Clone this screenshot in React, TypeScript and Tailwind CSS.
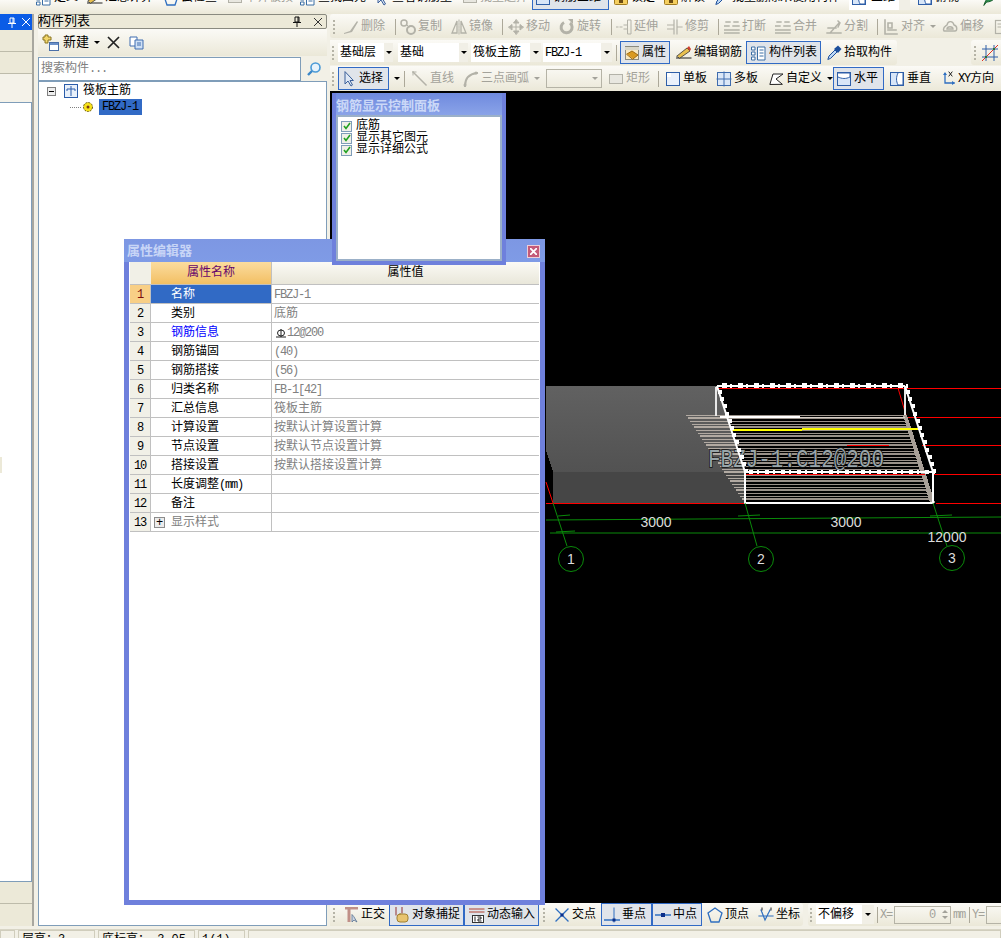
import type { ReactNode } from 'react'

const G = '#b3b2a8'

function Svg({ children }: { children: ReactNode }) {
  return (
    <svg width="16" height="16" viewBox="0 0 16 16" fill="none" strokeLinecap="square">
      {children}
    </svg>
  )
}

const icons: Record<string, ReactNode> = {
  brush: <Svg><path d="M1 14 L7 12 L14 2 L15 3 L9 13 L1 15Z" fill={G} /></Svg>,
  copy: <Svg><circle cx="4" cy="4" r="3" stroke={G} strokeWidth="1.5" /><circle cx="11" cy="11" r="4" stroke={G} strokeWidth="2" /><path d="M7 6 L9 8" stroke={G} /></Svg>,
  mirror: <Svg><path d="M6 2 L1 14 H6Z M10 2 L15 14 H10Z" stroke={G} strokeWidth="1.3" /><path d="M8 1 V15" stroke={G} strokeDasharray="2 1" /></Svg>,
  move: <Svg><path d="M8 1 V15 M1 8 H15 M8 1 L5.5 4 H10.5Z M8 15 L5.5 12 H10.5Z M1 8 L4 5.5 V10.5Z M15 8 L12 5.5 V10.5Z" stroke={G} fill={G} /></Svg>,
  rotate: <Svg><path d="M11 4 A5.5 5.5 0 1 1 5 3.5" stroke={G} strokeWidth="3" strokeLinecap="butt" /><path d="M9 0 H14 V5Z" fill={G} /></Svg>,
  extend: <Svg><path d="M0 8 H2 M4 8 H6 M8 6 H11 M8 10 H11 M12 1 H15 V15 H12Z" stroke={G} /></Svg>,
  trim: <Svg><path d="M0 6 H6 M0 10 H6 M7 1 V15 M10 1 V15 M11 8 H15" stroke={G} strokeWidth="1.2" /></Svg>,
  cut: <Svg><path d="M2 3 H6 M10 3 H14 M0 7 H5 M9 7 H15 M0 11 H15 M0 14 H15" stroke={G} strokeWidth="1.4" /></Svg>,
  split: <Svg><path d="M1 14 H15 M4 14 L13 4 M2 9 H10 M12 2 L14 4 L12 8" stroke={G} strokeWidth="1.4" /></Svg>,
  align: <Svg><path d="M2 1 V15 H14 M5 4 H9 V9 H5Z M5 11 H13" stroke={G} strokeWidth="1.6" /></Svg>,
  offset: <Svg><path d="M2 12 C0 8 4 7 5 6 C6 1 11 2 12 6 C16 7 15 12 13 12Z M5 10 C5 7 11 7 11 10Z" stroke={G} strokeWidth="1.4" /></Svg>,
  box: <Svg><rect x="2.5" y="1.5" width="11" height="13" stroke={G} strokeWidth="1.2" /><path d="M5 5 H11 M5 8 H11" stroke={G} /></Svg>,
  prop: <Svg><rect x="1.5" y="1.5" width="13" height="13" fill="#f8e8c0" stroke="#8a8a80" /><path d="M1 2 H15 V5 H1Z" fill="#d9d6c8" /><path d="M3 9 L8 6 L14 10 L9 14Z" fill="#d99a20" stroke="#a06a10" /></Svg>,
  lock: <Svg><rect x="1.5" y="1.5" width="13" height="13" rx="1" fill="#f5cf5f" stroke="#a07a20" /><path d="M8 4 V9" stroke="#6a4a10" strokeWidth="2" /><rect x="6" y="10" width="4" height="3" fill="#6a4a10" /></Svg>,
  edit: <Svg><path d="M0 13 H15" stroke="#222" /><path d="M1 11 L11 3 L14 6 L4 13Z" fill="#e8c050" stroke="#333" strokeWidth=".8" /><path d="M11 3 L13 1 L15 4 L14 6Z" fill="#d04030" /></Svg>,
  list: <Svg><path d="M1 2 H4 V5 H1Z M1 7 H4 V10 H1Z M1 12 H4 V15 H1Z" stroke="#3a6ea5" fill="#fff" /><path d="M7 2 H14 V15 H7Z" fill="#fff" stroke="#3a6ea5" /><path d="M9 5 H12 M9 8 H12 M9 11 H12" stroke="#3a6ea5" /></Svg>,
  dropper: <Svg><path d="M2 14 L3 11 L9 5 L11 7 L5 13Z" fill="#bcd7f5" stroke="#1c4f9c" /><path d="M8 4 L12 0.5 L15.5 4 L12 8Z" fill="#1c4f9c" /></Svg>,
  cursor: <Svg><path d="M4 1 V13 L7 10 L10 15 L11.5 14 L9 9.5 H12Z" fill="#dfe8f5" stroke="#3a5f9a" strokeLinejoin="round" strokeLinecap="round" /></Svg>,
  line: <Svg><path d="M1 1 L14 14" stroke={G} strokeWidth="1.5" /><path d="M1 1 H4 M1 1 V4" stroke={G} /></Svg>,
  arc: <Svg><path d="M2 15 C2 8 6 3 14 2" stroke={G} strokeWidth="2" /><circle cx="13" cy="2" r="1.5" fill={G} /><circle cx="2" cy="14" r="1.5" fill={G} /></Svg>,
  rect: <Svg><rect x="1.5" y="3.5" width="13" height="9" fill="#e8e7e0" stroke={G} /></Svg>,
  single: <Svg><rect x="1.5" y="1.5" width="13" height="13" fill="#eaf1fb" stroke="#2f5fa8" /><path d="M2 2 H6 V6 H2Z" fill="#fff" /></Svg>,
  multi: <Svg><rect x="1.5" y="1.5" width="13" height="13" fill="#dce8f7" stroke="#3e6cae" /><path d="M8 1 V15 M1 8 H15" stroke="#3e6cae" /></Svg>,
  custom: <Svg><path d="M2 13 L5 3 H15 L8 8 L14 13Z" stroke="#222" fill="#fff" strokeLinejoin="round" /></Svg>,
  horiz: <Svg><rect x="1.5" y="1.5" width="13" height="13" fill="#d8e6f8" stroke="#2f5fa8" /><path d="M2 2 H14 V6 C10 8 6 8 2 6Z" fill="#fff" stroke="#2f5fa8" /></Svg>,
  vert: <Svg><rect x="1.5" y="1.5" width="13" height="13" fill="#d8e6f8" stroke="#2f5fa8" /><path d="M9 2 C7 6 7 10 9 14 H14 V2Z" fill="#fff" stroke="#2f5fa8" /></Svg>,
  xy: <Svg><path d="M5 3 V12 H14" stroke="#2f6fc0" strokeWidth="1.3" /><path d="M5 1 L3 4 H7Z M15 12 L12 10 V14Z" fill="#2f6fc0" /><path d="M9 1 L12 5 M12 1 L9 5" stroke="#222" /></Svg>,
  ortho: <Svg><path d="M2 1 H15 M6 1 V15" stroke="#c09088" strokeWidth="3" strokeLinecap="butt" /><path d="M9 8 V15 L11 13 L14 15 L11 10Z" fill="#cfd8e6" stroke="#55708f" strokeWidth=".8" /></Svg>,
  snap: <Svg><path d="M2 0 V8 M8 0 V6" stroke="#903030" /><rect x="3" y="7" width="11" height="8" rx="3" fill="#e8c470" stroke="#a08030" /></Svg>,
  dyn: <Svg><path d="M0 2 H15 M0 5 H15" stroke="#b04030" /><rect x="3.5" y="8.5" width="11" height="7" fill="#fff" stroke="#333" /><path d="M6 10 V14 M9 10 H12 V12 H9 V14 H12" stroke="#222" /></Svg>,
  cross: <Svg><path d="M2 2 L14 14 M14 2 L2 14" stroke="#2f6fc0" strokeWidth="1.3" /><rect x="6.5" y="6.5" width="3" height="3" fill="#0b2f8a" /></Svg>,
  perp: <Svg><path d="M0 13 H16" stroke="#2f6fc0" strokeWidth="1.5" /><path d="M10 1 V15" stroke="#2f6fc0" /><rect x="8.5" y="11.5" width="3" height="3" fill="#0b2f8a" /></Svg>,
  mid: <Svg><path d="M0 8 H16" stroke="#2f6fc0" strokeWidth="1.5" /><rect x="6" y="6" width="4" height="4" fill="#0b2f8a" /></Svg>,
  vertex: <Svg><path d="M8 1 L15 6 L12 15 H4 L1 6Z" stroke="#2f6fc0" strokeWidth="1.3" /></Svg>,
  coord: <Svg><path d="M3 3 L7 13 L12 3 M1 9 H15" stroke="#2f6fc0" strokeWidth="1.2" strokeDasharray="2 1" /><path d="M4 1 V3 M13 1 V3" stroke="#222" /></Svg>,
  leaf: <Svg><path d="M1 15 C3 8 8 3 15 1 C14 8 9 12 4 12Z" fill="#2f8f4f" stroke="#1c5f30" /></Svg>,
}

// half-width latin, the reference's font sets it at 6px per character
function Lat({ children }: { children: ReactNode }) {
  return <span className="text-[12px] tracking-[-1.2px]">{children}</span>
}

type Tool = { label?: ReactNode; icon?: string; w: string; on?: boolean; off?: boolean; arrow?: boolean; extra?: string }

function Item({ label, icon, w, on, off, arrow, extra }: Tool) {
  return (
    <div
      className={`${w} ${extra ?? ''} h-[23px] shrink-0 flex items-center border ${
        on ? 'border-[#316ac5] bg-[#e0e4ea]' : 'border-transparent'
      } ${off ? 'text-[#a3a29a]' : 'text-black'}`}
    >
      <span className="w-[19px] flex justify-center shrink-0">{icon ? icons[icon] : null}</span>
      <span className="ml-[1px] whitespace-nowrap">{label}</span>
      {arrow && <Caret off={off} />}
    </div>
  )
}

function Caret({ off }: { off?: boolean }) {
  return (
    <span
      className={`ml-[5px] w-0 h-0 border-x-[3px] border-t-[3px] border-x-transparent ${
        off ? 'border-t-[#a3a29a]' : 'border-t-black'
      }`}
    />
  )
}

function Grip({ w }: { w: string }) {
  return (
    <div className={`${w} shrink-0 flex flex-col items-center gap-[2px] pr-[3px]`}>
      <i className="w-[2px] h-[2px] bg-[#b5b3a6]" />
      <i className="w-[2px] h-[2px] bg-[#b5b3a6]" />
      <i className="w-[2px] h-[2px] bg-[#b5b3a6]" />
      <i className="w-[2px] h-[2px] bg-[#b5b3a6]" />
    </div>
  )
}

function Sep({ w }: { w: string }) {
  return (
    <div className={`${w} shrink-0 flex justify-center`}>
      <i className="w-[1px] h-[16px] bg-[#aca899]" />
    </div>
  )
}

function Select({ label, w, btn }: { label: ReactNode; w: string; btn: string }) {
  return (
    <div className={`${w} h-[19px] shrink-0 flex bg-white items-center pl-[2px]`}>
      <span className="flex-1 whitespace-nowrap">{label}</span>
      <span className={`${btn} h-full bg-[#f1efe6] flex items-center justify-center`}>
        <i className="w-0 h-0 border-x-[3px] border-t-[3px] border-x-transparent border-t-black" />
      </span>
    </div>
  )
}

const barBg = 'bg-gradient-to-b from-[#fbfaf6] to-[#ebe8d8]'

const props: [ReactNode, string][] = [
  ['名称', 'FBZJ-1'],
  ['类别', '底筋'],
  ['钢筋信息', '12@200'],
  ['钢筋锚固', '(40)'],
  ['钢筋搭接', '(56)'],
  ['归类名称', 'FB-1[42]'],
  ['汇总信息', '筏板主筋'],
  ['计算设置', '按默认计算设置计算'],
  ['节点设置', '按默认节点设置计算'],
  ['搭接设置', '按默认搭接设置计算'],
  [<>长度调整<Lat>(mm)</Lat></>, ''],
  ['备注', ''],
  ['显示样式', ''],
]

function PropRow({ name, value, i }: { name: ReactNode; value: string; i: number }) {
  const sel = i === 0
  const latin = /^[\x00-\x7f]+$/.test(value)
  return (
    <div className="flex h-[19px] border-b border-[#c0c0c0]">
      <div
        className={`w-[21px] shrink-0 flex items-center justify-center pt-[1px] border-r border-[#c0c0c0] ${
          sel ? 'bg-[#f8cf86] text-[#7a0d0d]' : 'bg-[#f1f0e7]'
        }`}
      >
        <Lat>{i + 1}</Lat>
      </div>
      <div
        className={`w-[121px] shrink-0 flex items-center pt-[1px] border-r border-[#c0c0c0] ${
          sel ? 'bg-[#316ac5] text-white' : i === 2 ? 'text-[#0000ff]' : i === 12 ? 'text-[#808080]' : 'text-black'
        }`}
      >
        {i === 12 ? (
          <span className="ml-[3px] mr-[6px] w-[11px] h-[11px] border border-[#8c8c8c] bg-[#ececec] flex items-center justify-center text-black">
            +
          </span>
        ) : (
          <span className="w-[20px]" />
        )}
        {name}
      </div>
      <div className="flex-1 flex items-center pt-[1px] pl-[2px] text-[#808080] whitespace-nowrap">
        {i === 2 && (
          <svg width="10" height="10" viewBox="0 0 10 10" className="ml-[2px] mr-[1px]" fill="none" stroke="#222">
            <path d="M5 1 V9 M0 9 H10" />
            <ellipse cx="5" cy="5" rx="3.5" ry="3" />
          </svg>
        )}
        {latin && value ? <Lat>{value}</Lat> : value}
      </div>
    </div>
  )
}

function Canvas() {
  const hatch = Array.from({ length: 30 }, (_, i) => 415 + i * 3)
  const dots = Array.from({ length: 12 }, (_, i) => i)
  return (
    <svg viewBox="330 91 671 812" width="671" height="812" className="block" shapeRendering="crispEdges">
      <defs>
        <linearGradient id="slab" x1="0" y1="0" x2="0" y2="1">
          <stop offset="0" stopColor="#616161" />
          <stop offset="1" stopColor="#525252" />
        </linearGradient>
      </defs>
      <polygon points="546,386 717,386 745,472 553,472 546,450" fill="url(#slab)" />
      <polygon points="553,472 745,472 745,503 553,503" fill="#464646" />
      {hatch.map((y, i) => {
        const mid = Math.min(726 + (y - 415) * 0.33, 745)
        return (
          <g key={y} strokeWidth={i % 3 === 1 ? 2 : 1}>
            <line x1={686 + (y - 415) * 0.67} x2={mid} y1={y} y2={y} stroke="#b2aaa2" />
            <line x1={mid} x2={904 + (y - 415) * 0.33} y1={y} y2={y} stroke="#9a9189" />
          </g>
        )
      })}
      <polygon points="903,415 907,415 935,503 930,503" fill="#a89f97" />
      <path d="M546 503 H745 M718 388 H905 M907 388 H1001 M908 417 H1001 M922 445 H1001 M847 445 H889 M745 474 H925 M934 474 H1001 M936 503 H1001" stroke="#ff0000" fill="none" />
      <path d="M898 388 L906 415 M546 482 L553 503" stroke="#ff0000" fill="none" shapeRendering="auto" />
      <path d="M731 430 H802 M802 429 H922" stroke="#ffff00" strokeWidth="2" />
      <path d="M720 417 H800" stroke="#ffffff" strokeWidth="2" />
      <path d="M800 417 H905" stroke="#d8d0c8" strokeWidth="1" />
      <text x="708" y="467" fontSize="25" textLength="176" lengthAdjust="spacingAndGlyphs" fill="#98a5aa" stroke="#111" strokeWidth="1.6" paintOrder="stroke" fontFamily="Liberation Mono" shapeRendering="auto">
        FBZJ-1:C12@200
      </text>
      <path d="M716 387 V416 M905 387 V415" stroke="#e8e8e8" strokeWidth="2" />
      <path d="M717 386 H905 M717 386 L745 472 M905 386 L933 472 M745 472 H933" stroke="#fff" strokeWidth="2" fill="none" shapeRendering="auto" />
      {Array.from({ length: 12 }, (_, i) => (
        <g key={i} fill="#fff">
          <rect x={722 + i * 16} y={383} width="5" height="5" />
          <rect x={730 + i * 16} y={384} width="2" height="4" />
          <rect x={749 + i * 16} y={470} width="4" height="4" />
          <rect x={757 + i * 16} y={470} width="2" height="4" />
        </g>
      ))}
      {dots.map(i => (
        <g key={i} fill="#fff">
          <rect x={718 + i * 2.4} y={390 + i * 7.2} width="4" height="4" />
          <rect x={906 + i * 2.4} y={390 + i * 7.2} width="4" height="4" />
        </g>
      ))}
      <path d="M745 472 V503 H933 V472" stroke="#fff" strokeWidth="2" fill="none" />
      <g stroke="#0a8a0a" fill="none" shapeRendering="auto">
        <path d="M546 520 L1001 517 M550 533 H1001" />
        <path d="M553 503 L567 546 M745 503 L757 546 M933 503 L947 546" />
        <path d="M558 516 L570 515 M738 516 L760 515 M930 516 L952 515 M556 532 L575 531" />
        <circle cx="571" cy="559" r="12.5" />
        <circle cx="761" cy="559" r="12.5" />
        <circle cx="952" cy="558" r="12.5" />
      </g>
      <g fill="#dcdcdc" fontFamily="Liberation Sans" fontSize="14" textAnchor="middle" shapeRendering="auto">
        <text x="656" y="527">3000</text>
        <text x="846" y="527">3000</text>
        <text x="947" y="542">12000</text>
        <text x="571" y="564">1</text>
        <text x="761" y="564">2</text>
        <text x="952" y="563">3</text>
      </g>
    </svg>
  )
}

export default function App() {
  return (
    <div className="relative w-[1001px] h-[938px] overflow-hidden bg-[#f2f0e6] text-[12px] leading-none font-['Liberation_Mono','Noto_Sans_CJK_SC',monospace]">
      {/* clipped main toolbar */}
      <div className={`h-[14px] overflow-hidden ${barBg}`}>
        <div className="flex items-center h-[24px] -mt-[14px] pl-[33px]">
          <Item icon="list" label="定义" w="w-[51px]" />
          <Item icon="edit" label="汇总计算" w="w-[76px]" />
          <Item icon="vertex" label="云检查" w="w-[64px]" />
          <Item off icon="rect" label="平齐板顶" w="w-[73px]" />
          <Item icon="list" label="查找图元" w="w-[74px]" />
          <Item icon="cursor" label="查看钢筋量" w="w-[88px]" />
          <Item off icon="rect" label="批量选择" w="w-[73px]" />
          <Item on icon="horiz" label="钢筋三维" w="w-[77px]" />
          <Item icon="lock" label="锁定" w="w-[50px] ml-[1px]" />
          <Item icon="lock" label="解锁" w="w-[51px]" />
          <Item icon="dropper" label="批量删除未使用构件" w="w-[138px]" />
          <div className="w-[50px] h-[23px] bg-white flex items-center shrink-0">
            <span className="ml-[2px] mr-[4px] flex">{icons.vert}</span>
            三维
          </div>
          <div className="w-[11px] h-[23px] bg-[#f1efe6] shrink-0" />
          <Item icon="vert" label="俯视" w="w-[66px] ml-[4px]" arrow />
          <Item icon="leaf" w="w-[21px]" />
        </div>
      </div>

      <div className="flex h-[912px]">
        {/* left collapsed panel */}
        <div className="w-[34px] shrink-0 flex flex-col border-r-2 border-[#a8a79f] bg-[#ece9d8]">
          <div className="h-[16px] bg-[#0a5ce6] flex items-center justify-end gap-[5px] pr-[2px] shrink-0">
            <svg width="10" height="11" viewBox="0 0 10 11" fill="none" stroke="#fff"><path d="M3 1 H7 V6 H3Z M1 6.5 H9 M5 7 V11 M6 1 V6" /></svg>
            <svg width="8" height="8" viewBox="0 0 8 8" stroke="#fff"><path d="M0 0 L8 8 M8 0 L0 8" /></svg>
          </div>
          <div className="h-[22px] border-b border-[#bdbbaa] shrink-0" />
          <div className="h-[22px] border-b border-[#bdbbaa] shrink-0" />
          <div className="h-[28px] bg-[#f4f2e9] shrink-0" />
          <div className="flex-1 bg-white border-y border-r border-[#7f9db9] relative">
            <div className="absolute left-0 top-[354px] w-[2px] h-[16px] bg-[#ece9d8]" />
          </div>
          <div className="h-[22px] border-b border-[#bdbbaa] shrink-0" />
          <div className="h-[22px] shrink-0" />
        </div>
        <div className="w-[4px] shrink-0 bg-[#f2f0e6]" />

        {/* component list */}
        <div className="w-[289px] shrink-0 flex flex-col">
          <div className="h-[15px] shrink-0 border border-[#8a8a80] bg-[#ece9d8] rounded-[2px] flex items-center pr-[4px]">
            <span className="flex-1 -ml-[1px] whitespace-nowrap text-[13px]">构件列表</span>
            <svg width="10" height="11" viewBox="0 0 10 11" fill="none" stroke="#111"><path d="M3 1 H7 V6 H3Z M1 6.5 H9 M5 7 V11 M6 1 V6" /></svg>
            <svg width="8" height="8" viewBox="0 0 8 8" stroke="#333" className="ml-[12px]"><path d="M0 0 L8 8 M8 0 L0 8" /></svg>
          </div>
          <div className={`h-[27px] shrink-0 flex items-center pl-[4px] ${barBg}`}>
            <svg width="18" height="18" viewBox="0 0 18 18" fill="none"><path d="M3 1 H6 V3 H9 V6 H6 V9 H3 V6 H1 V3 H3Z" fill="#f2d76b" stroke="#8a7420" /><rect x="7.5" y="8.5" width="9" height="8" fill="#fff" stroke="#4a6fa8" /><path d="M8 9 H16 V11 H8Z" fill="#6b90c8" /></svg>
            <span className="ml-[3px] text-[13px] leading-none">新建</span>
            <Caret />
            <svg width="13" height="13" viewBox="0 0 13 13" stroke="#222" strokeWidth="1.7" className="ml-[7px]"><path d="M1 1 L12 12 M12 1 L1 12" /></svg>
            <svg width="16" height="14" viewBox="0 0 16 14" fill="#fff" stroke="#3f6db0" className="ml-[9px]"><path d="M1 1 H8 V10 H1Z" /><path d="M6 4 H14 V13 H6Z" fill="#cfe0f5" /><path d="M8 7 H12 M8 9 H12" /></svg>
          </div>
          <div className="h-[25px] shrink-0 flex items-center">
            <div className="w-[263px] h-[24px] bg-white border border-[#7f9db9] text-[#808080] flex items-center pl-[2px] text-[12px]">搜索构件<Lat>...</Lat></div>
            <div className="w-[26px] flex justify-center">
              <svg width="16" height="16" viewBox="0 0 16 16" fill="none"><circle cx="9.5" cy="6.5" r="4.5" fill="#e8f3fb" stroke="#4a9ad6" strokeWidth="1.6" /><path d="M6 10 L2 14" stroke="#3a86c8" strokeWidth="2.4" /></svg>
            </div>
          </div>
          <div className="flex-1 bg-white border border-[#7f9db9] pl-[8px] pt-[1px]">
            <div className="flex items-center h-[16px]">
              <span className="w-[9px] h-[9px] border border-[#808080] bg-[#eee] flex items-center justify-center">
                <i className="w-[5px] h-[1px] bg-black" />
              </span>
              <svg width="14" height="14" viewBox="0 0 14 14" fill="none" stroke="#2a5caa" className="ml-[8px]"><rect x=".5" y=".5" width="13" height="13" fill="#e8f0fa" /><path d="M3 5 H11 M7 2 V12 M3 5 V7 M11 5 V7" /></svg>
              <span className="ml-[5px]">筏板主筋</span>
            </div>
            <div className="flex items-center h-[16px]">
              <i className="ml-[23px] w-[11px] border-t border-dotted border-[#808080]" />
              <svg width="12" height="12" viewBox="0 0 12 12" className="ml-[1px]"><circle cx="6" cy="6" r="4.5" fill="#f7e21a" stroke="#6a5a10" strokeDasharray="2 1" /><circle cx="6" cy="6" r="1.5" fill="#7a3a10" /></svg>
              <span className="ml-[5px] h-[16px] w-[43px] bg-[#316ac5] flex items-center pl-[3px] whitespace-nowrap"><Lat>FBZJ-1</Lat></span>
            </div>
          </div>
        </div>
        <div className="w-[3px] shrink-0" />

        {/* drawing column */}
        <div className="w-[671px] shrink-0 flex flex-col">
          <div className={`h-[24px] shrink-0 flex items-center pt-[1px] rounded-l-[3px] ${barBg}`}>
            <Grip w="w-[10px]" />
            <Item off icon="brush" label="删除" w="w-[53px]" />
            <Sep w="w-[4px]" />
            <Item off icon="copy" label="复制" w="w-[51px]" />
            <Item off icon="mirror" label="镜像" w="w-[52px]" />
            <Sep w="w-[5px]" />
            <Item off icon="move" label="移动" w="w-[51px]" />
            <Item off icon="rotate" label="旋转" w="w-[53px]" />
            <Sep w="w-[4px]" />
            <Item off icon="extend" label="延伸" w="w-[51px]" />
            <Item off icon="trim" label="修剪" w="w-[52px]" />
            <Sep w="w-[5px]" />
            <Item off icon="cut" label="打断" w="w-[51px]" />
            <Item off icon="cut" label="合并" w="w-[51px]" />
            <Item off icon="split" label="分割" w="w-[52px]" />
            <Sep w="w-[5px]" />
            <Item off icon="align" label="对齐" w="w-[59px]" arrow />
            <Item off icon="offset" label="偏移" w="w-[51px]" />
            <Item off icon="box" w="w-[11px]" />
          </div>
          <div className="h-[2px] shrink-0" />
          <div className="h-[25px] shrink-0 flex items-center">
            <div className={`w-[567px] h-full flex items-center rounded-r-[3px] ${barBg}`}>
              <Grip w="w-[8px]" />
              <Select label="基础层" w="w-[55px] mr-[5px]" btn="w-[9px]" />
              <Select label="基础" w="w-[70px] mr-[3px]" btn="w-[9px]" />
              <Select label="筏板主筋" w="w-[70px] mr-[2px]" btn="w-[11px]" />
              <Select label={<Lat>FBZJ-1</Lat>} w="w-[69px]" btn="w-[11px]" />
              <Sep w="w-[8px]" />
              <Item on icon="prop" label="属性" w="w-[50px]" extra="pl-[1px]" />
              <Item icon="edit" label="编辑钢筋" w="w-[73px] ml-[3px]" />
              <Item on icon="list" label="构件列表" w="w-[75px]" extra="pl-[2px]" />
              <Item icon="dropper" label="拾取构件" w="w-[73px] ml-[2px]" />
            </div>
            <div className="w-[74px] h-full" />
            <div className={`w-[30px] h-full flex items-center rounded-l-[3px] ${barBg}`}>
              <Grip w="w-[11px]" />
              <svg width="16" height="16" viewBox="0 0 16 16" fill="none"><path d="M4 0 V16 M12 0 V16 M0 4 H16 M0 12 H16" stroke="#2f5fa8" /><path d="M0 16 L16 0" stroke="#e03020" /><rect x="3" y="11" width="2" height="2" fill="#307030" /><rect x="11" y="3" width="2" height="2" fill="#307030" /></svg>
            </div>
          </div>
          <div className="h-[1px] shrink-0" />
          <div className={`h-[25px] shrink-0 flex items-center ${barBg}`}>
            <Grip w="w-[8px]" />
            <Item on icon="cursor" label="选择" w="w-[51px]" />
            <div className="w-[11px] flex justify-center"><Caret /></div>
            <Sep w="w-[9px]" />
            <Item off icon="line" label="直线" w="w-[51px]" />
            <Item off icon="arc" label="三点画弧" w="w-[86px]" arrow />
            <div className="w-[56px] h-[19px] shrink-0 border border-[#b5b3a6] flex items-center justify-end pr-[3px]">
              <i className="w-0 h-0 border-x-[3px] border-t-[3px] border-x-transparent border-t-[#a3a29a]" />
            </div>
            <Item off icon="rect" label="矩形" w="w-[50px] ml-[3px]" />
            <Sep w="w-[7px]" />
            <Item icon="single" label="单板" w="w-[51px]" />
            <Item icon="multi" label="多板" w="w-[52px]" />
            <Item icon="custom" label="自定义" w="w-[68px]" arrow />
            <Item on icon="horiz" label="水平" w="w-[51px]" />
            <Item icon="vert" label="垂直" w="w-[51px] ml-[2px]" />
            <Item icon="xy" label={<><Lat>XY</Lat>方向</>} w="w-[60px]" />
          </div>
          <div className="h-[812px] shrink-0 bg-black">
            <Canvas />
          </div>
          <div className="h-[23px] shrink-0 flex items-center">
            <div className={`w-[473px] h-full flex items-center rounded-r-[3px] ${barBg}`}>
              <Grip w="w-[10px]" />
              <Item icon="ortho" label="正交" w="w-[49px]" />
              <Item on icon="snap" label="对象捕捉" w="w-[75px]" extra="pl-[2px]" />
              <Item on icon="dyn" label="动态输入" w="w-[75px]" extra="pl-[2px]" />
              <Grip w="w-[12px]" />
              <Item icon="cross" label="交点" w="w-[50px]" />
              <Item on icon="perp" label="垂点" w="w-[51px]" />
              <Item on icon="mid" label="中点" w="w-[50px]" />
              <Item icon="vertex" label="顶点" w="w-[50px] ml-[2px]" />
              <Item icon="coord" label="坐标" w="w-[48px] ml-[1px]" />
            </div>
            <div className={`flex-1 ml-[5px] h-full flex items-center rounded-l-[3px] ${barBg}`}>
              <Grip w="w-[8px]" />
              <Select label="不偏移" w="w-[58px]" btn="w-[12px]" />
              <Sep w="w-[6px]" />
              <span className="text-[#a3a29a] w-[14px]"><Lat>X=</Lat></span>
              <div className="w-[57px] h-[18px] shrink-0 border border-[#b5b3a6] flex items-center justify-end text-[#a3a29a]">
                <Lat>0</Lat>
                <span className="ml-[5px] w-[10px] flex flex-col items-center gap-[3px]">
                  <i className="w-0 h-0 border-x-[3px] border-b-[3px] border-x-transparent border-b-[#a3a29a]" />
                  <i className="w-0 h-0 border-x-[3px] border-t-[3px] border-x-transparent border-t-[#a3a29a]" />
                </span>
              </div>
              <span className="text-[#a3a29a] ml-[2px] w-[14px]"><Lat>mm</Lat></span>
              <Sep w="w-[5px]" />
              <span className="text-[#a3a29a] w-[14px]"><Lat>Y=</Lat></span>
              <div className="w-[16px] h-[18px] shrink-0 border-y border-l border-[#b5b3a6]" />
            </div>
          </div>
        </div>
      </div>

      {/* status bar */}
      <div className="h-[4px] border-b border-[#d8d5c5]" />
      <div className="h-[8px] overflow-hidden flex gap-[3px]">
        <div className="w-[15px] h-[20px] border border-[#d0cdbc]" />
        <div className="w-[77px] h-[20px] border border-[#d0cdbc] pl-[3px] pt-[3px]">层高：3</div>
        <div className="w-[97px] h-[20px] border border-[#d0cdbc] pl-[3px] pt-[3px]">底标高：-3.05</div>
        <div className="w-[47px] h-[20px] border border-[#d0cdbc] pl-[3px] pt-[3px]">1(1)</div>
        <div className="flex-1 h-[20px] border border-[#d0cdbc]" />
      </div>

      {/* rebar display panel */}
      <div className="absolute left-[332px] top-[93px] w-[174px] h-[172px] border-[4px] border-t-0 border-[#6e80dc] bg-[#6e80dc] z-10 flex flex-col">
        <div className="h-[22px] shrink-0 bg-gradient-to-b from-[#6f8ade] to-[#8aa3e8] flex items-center text-[#cbd8f7] font-bold text-[13px] pt-[4px] whitespace-nowrap">钢筋显示控制面板</div>
        <div className="flex-1 bg-white border-2 border-[#9bb0c8] pl-[3px] pt-[3px]">
          {['底筋', '显示其它图元', '显示详细公式'].map(t => (
            <div key={t} className="flex items-center h-[12px]">
              <span className="w-[11px] h-[11px] border border-[#7f9db9] bg-[#f0f0e8] flex items-center justify-center">
                <svg width="8" height="8" viewBox="0 0 8 8" fill="none" stroke="#21a121" strokeWidth="1.6"><path d="M1 4 L3 6.5 L7 1" /></svg>
              </span>
              <span className="ml-[4px]">{t}</span>
            </div>
          ))}
        </div>
      </div>

      {/* property editor */}
      <div className="absolute left-[124px] top-[239px] w-[421px] h-[666px] border-[5px] border-t-0 border-[#6f80dc] bg-white flex flex-col">
        <div className="h-[23px] -mx-[5px] shrink-0 bg-gradient-to-b from-[#7d97e3] to-[#7f9be6] flex items-center text-[#c8d5f6] font-bold text-[13px] pl-[3px] pt-[1px]">
          <span className="flex-1">属性编辑器</span>
          <span className="w-[13px] h-[13px] mr-[5px] bg-[#c45a78] border border-white/70 flex items-center justify-center">
            <svg width="7" height="7" viewBox="0 0 7 7" stroke="#fff" strokeWidth="1.8"><path d="M0 0 L7 7 M7 0 L0 7" /></svg>
          </span>
        </div>
        <div className="w-[409px] ml-[1px]">
          <div className="flex h-[23px] border-b border-[#c0c0c0]">
            <div className="w-[21px] bg-[#f1f0e7]" />
            <div className="w-[121px] flex items-center justify-center bg-gradient-to-b from-[#fbdc9e] to-[#f2bf62] text-[#66066b] border-r border-[#c0c0c0]">属性名称</div>
            <div className="flex-1 flex items-center justify-center bg-gradient-to-b from-[#fbfaf5] to-[#e9e7da]">属性值</div>
          </div>
          {props.map(([name, value], i) => (
            <PropRow key={i} name={name} value={value} i={i} />
          ))}
        </div>
      </div>
    </div>
  )
}
